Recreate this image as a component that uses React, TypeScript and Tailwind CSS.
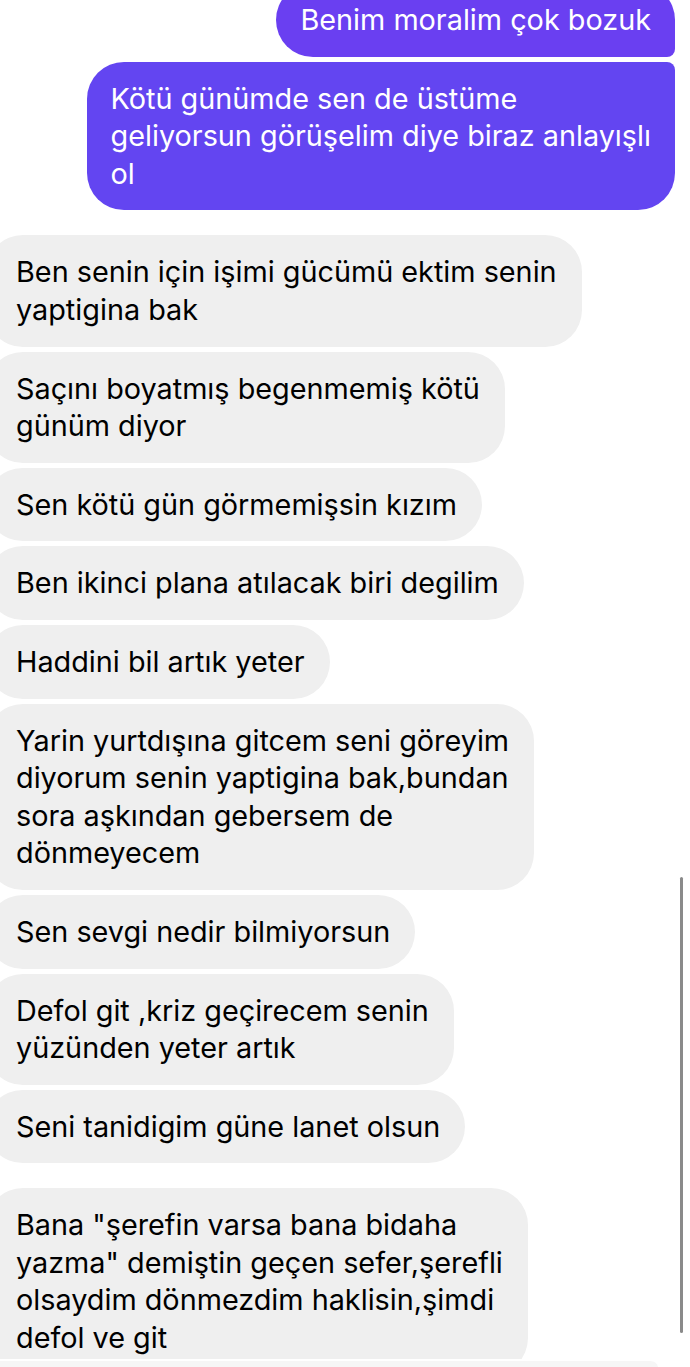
export default function App() {
  const received: string[][] = [
    ["Ben senin için işimi gücümü ektim senin", "yaptigina bak"],
    ["Saçını boyatmış begenmemiş kötü", "günüm diyor"],
    ["Sen kötü gün görmemişsin kızım"],
    ["Ben ikinci plana atılacak biri degilim"],
    ["Haddini bil artık yeter"],
    [
      "Yarin yurtdışına gitcem seni göreyim",
      "diyorum senin yaptigina bak,bundan",
      "sora aşkından gebersem de",
      "dönmeyecem",
    ],
    ["Sen sevgi nedir bilmiyorsun"],
    ["Defol git ,kriz geçirecem senin", "yüzünden yeter artık"],
    ["Seni tanidigim güne lanet olsun"],
  ];

  const last = [
    'Bana "şerefin varsa bana bidaha',
    'yazma" demiştin geçen sefer,şerefli',
    "olsaydim dönmezdim haklisin,şimdi",
    "defol ve git",
  ];

  return (
    <div
      className="relative h-[1367px] w-[690px] overflow-hidden bg-white text-[28.8px] leading-[37.6px]"
      style={{ fontFamily: "Inter, 'Noto Sans', sans-serif" }}
    >
      <div className="flex flex-col">
        <div className="-mt-[17px] mr-[15px] self-end whitespace-nowrap rounded-[37px] rounded-br-[8px] bg-[#6a3ff1] py-[18px] pl-[24px] pr-[24px] text-white">
          Benim moralim çok bozuk
        </div>
        <div className="mt-[5px] mr-[15px] self-end whitespace-nowrap rounded-[37px] rounded-tr-[8px] bg-[#6345f1] py-[18px] pl-[24px] pr-[24px] text-white">
          Kötü günümde sen de üstüme
          <br />
          geliyorsun görüşelim diye biraz anlayışlı
          <br />
          ol
        </div>

        <div className="mt-[25px] flex flex-col gap-[5px]">
          {received.map((lines, i) => (
            <div
              key={i}
              className="-ml-[14px] self-start whitespace-nowrap rounded-[37px] bg-[#efefef] py-[18px] pl-[30px] pr-[25px] text-black"
            >
              {lines.map((l, j) => (
                <div key={j}>{l}</div>
              ))}
            </div>
          ))}
        </div>

        <div className="mt-[25px] -ml-[14px] self-start whitespace-nowrap rounded-[37px] bg-[#efefef] py-[18px] pl-[30px] pr-[25px] text-black">
          {last.map((l, j) => (
            <div key={j}>{l}</div>
          ))}
        </div>
      </div>

      <div className="absolute bottom-0 left-0 h-[8px] w-[658px] rounded-tr-[24px] border-t-2 border-white bg-[#f6f6f6]" />
      <div className="absolute right-[7px] top-[877px] h-[456px] w-[3px] rounded-full bg-[#8a8a8a]" />
    </div>
  );
}
